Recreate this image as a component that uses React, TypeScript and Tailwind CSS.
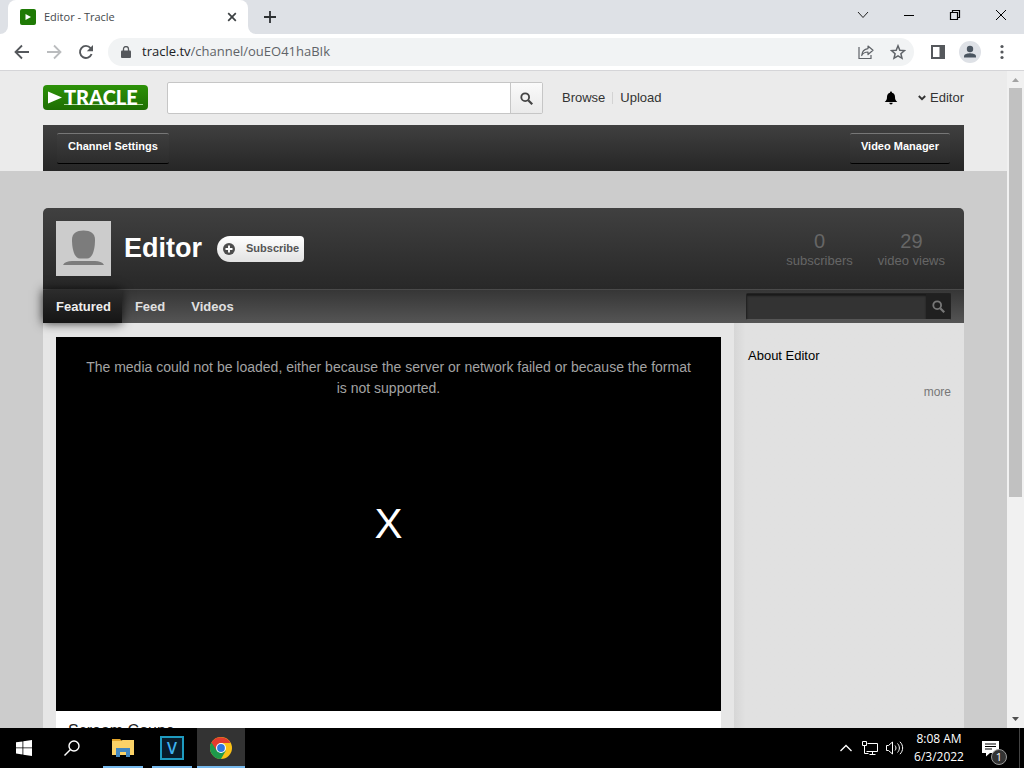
import React from "react";

const WindowTabs = () => {
  return (
    <div className="flex h-[34px] items-stretch bg-[#dee1e6]">
      <div className="flex w-2 items-end bg-white">
        <div className="h-full w-full rounded-br-lg bg-[#dee1e6]"></div>
      </div>
      <div className="flex w-[240px] items-center rounded-t-lg bg-white pl-3 pr-2">
        <svg className="h-4 w-4" viewBox="0 0 16 16">
          <rect width="16" height="16" rx="2" fill="#1f7a05" />
          <path d="M5.500 5v6l5.500-3z" fill="#fff" />
        </svg>
        <span className="ml-2 flex-1 text-[11px] text-[#45494d]">Editor - Tracle</span>
        <button aria-label="Close tab" className="flex h-4 w-4 items-center justify-center">
          <svg className="h-4 w-4" viewBox="0 0 16 16" stroke="#3c4043" strokeWidth="1.7">
            <path d="M4.200 4.200l7.600 7.600M11.800 4.200l-7.600 7.600" />
          </svg>
        </button>
      </div>
      <div className="w-2 bg-white">
        <div className="h-full w-full rounded-bl-lg bg-[#dee1e6]"></div>
      </div>
      <button aria-label="New tab" className="ml-1 flex w-5 items-center justify-center">
        <svg className="h-4 w-4" viewBox="0 0 16 16" stroke="#2d3033" strokeWidth="1.8">
          <path d="M8 2v12M2 8h12" />
        </svg>
      </button>
      <div className="ml-auto flex pb-1">
        <button aria-label="Search tabs" className="flex w-[46px] items-center justify-center">
          <svg className="h-3 w-3" viewBox="0 0 12 12" fill="none" stroke="#222">
            <path d="M1 3l5 5.500L11 3" />
          </svg>
        </button>
        <button aria-label="Minimize" className="flex w-[46px] items-center justify-center">
          <svg className="h-3 w-3" viewBox="0 0 12 12" stroke="#000">
            <path d="M1 6.500h10" />
          </svg>
        </button>
        <button aria-label="Restore" className="flex w-[46px] items-center justify-center">
          <svg className="h-3 w-3" viewBox="0 0 12 12" fill="none" stroke="#000" strokeWidth="1.200">
            <path d="M1.500 3.500h7v7h-7zM3.500 3.500v-2h7v7h-2" />
          </svg>
        </button>
        <button aria-label="Close" className="flex w-[46px] items-center justify-center">
          <svg className="h-3 w-3" viewBox="0 0 12 12" stroke="#000">
            <path d="M1 1l10 10M11 1L1 11" />
          </svg>
        </button>
      </div>
    </div>
  );
};

const Toolbar = () => {
  return (
    <div className="flex h-[37px] items-center border-b border-[#d5d5d8] bg-white px-[14px]">
      <div className="flex gap-4">
        <button aria-label="Back">
          <svg className="h-4 w-4" viewBox="0 0 16 16" fill="none" stroke="#55585c" strokeWidth="1.8">
            <path d="M15 8H2M8 1.500L1.500 8 8 14.500" />
          </svg>
        </button>
        <button aria-label="Forward">
          <svg className="h-4 w-4" viewBox="0 0 16 16" fill="none" stroke="#babcbe" strokeWidth="1.8">
            <path d="M1 8h13M8 1.500L14.500 8 8 14.500" />
          </svg>
        </button>
        <button aria-label="Reload">
          <svg className="h-4 w-4" viewBox="0 0 16 16" fill="none" stroke="#55585c" strokeWidth="1.9">
            <path d="M13.600 10A6 6 0 1 1 12.600 4.100L14 5.500" />
            <path d="M15 1v6.200H8.800z" fill="#55585c" stroke="none" />
          </svg>
        </button>
      </div>
      <div className="ml-[14px] flex h-7 flex-1 items-center rounded-full bg-[#f1f3f4] pl-[13px] pr-2 text-[13px]">
        <svg className="h-3 w-[10px]" viewBox="0 0 10 12">
          <rect y="4.500" width="10" height="7.500" rx="1" fill="#55585c" />
          <path d="M2.500 5V3a2.500 2.500 0 0 1 5 0v2" fill="none" stroke="#55585c" strokeWidth="1.300" />
        </svg>
        <label htmlFor="address" className="ml-[11px] text-[#202124]">tracle.tv</label>
        <input id="address" type="text" defaultValue="/channel/ouEO41haBIk" className="min-w-0 flex-1 text-[#5f6368] outline-none" />
        <button aria-label="Share" className="mr-4">
          <svg className="h-4 w-4" viewBox="0 0 16 16" fill="none" stroke="#5f6368" strokeWidth="1.200">
            <path d="M1 3v11.500h12V11" />
            <path d="M10 2l5 4.300-5 4.200V8C7 8 5 9 3.700 11.500 4 7.500 6.500 5 10 4.600z" strokeLinejoin="round" />
          </svg>
        </button>
        <button aria-label="Bookmark">
          <svg className="h-4 w-4" viewBox="0 0 16 16" fill="none" stroke="#5f6368" strokeWidth="1.500">
            <path d="M8 1.800l1.800 4.400 4.700.4-3.600 3.100 1.100 4.600L8 11.900l-4 2.400 1.100-4.600-3.600-3.100 4.700-.4z" />
          </svg>
        </button>
      </div>
      <div className="ml-4 flex items-center gap-[13px]">
        <button aria-label="Side panel">
          <svg className="h-4 w-4" viewBox="0 0 16 16">
            <path d="M1 1h14v14H1z" fill="#55585c" />
            <path d="M3 3h6.500v10H3z" fill="#fff" />
          </svg>
        </button>
        <button aria-label="Profile" className="rounded-full bg-[#dee1e6]">
          <svg className="h-[22px] w-[22px]" viewBox="0 0 22 22" fill="#4a5560">
            <circle cx="11" cy="8" r="3.200" />
            <path d="M5 16.500v-1.300C5 13 9 12.200 11 12.200s6 .8 6 3v1.300z" />
          </svg>
        </button>
        <button aria-label="Menu">
          <svg className="h-4 w-4" viewBox="0 0 16 16" fill="#55585c">
            <circle cx="8" cy="2.500" r="1.600" />
            <circle cx="8" cy="8" r="1.600" />
            <circle cx="8" cy="13.500" r="1.600" />
          </svg>
        </button>
      </div>
    </div>
  );
};

const SearchGlyph = ({ color }: { color: string }) => (
  <svg className="h-[13px] w-[13px]" viewBox="0 0 12 12" fill="none" stroke={color} strokeWidth="1.700">
    <circle cx="4.800" cy="4.800" r="3.600" />
    <path d="M7.600 7.600L11.300 11.300" strokeWidth="2" />
  </svg>
);

const SiteHeader = () => {
  return (
    <header className="h-[100px] bg-[#ebebeb]">
      <div className="mx-auto w-full max-w-[921px]">
        <div className="flex h-[54px] items-center">
          <a href="#" aria-label="Tracle home" className="mb-[2px]">
            <svg className="h-[25px] w-[105px]" viewBox="0 0 105 25">
              <defs>
                <linearGradient id="logo" x1="0" y1="0" x2="0" y2="1">
                  <stop offset="0" stopColor="#2d9208" />
                  <stop offset="1" stopColor="#1e6d03" />
                </linearGradient>
              </defs>
              <rect width="105" height="25" rx="4" fill="url(#logo)" />
              <path d="M5 6.500v12l14-6z" fill="#fff" />
              <path d="M21 19.500h79" stroke="#a9d59a" />
              <text x="21" y="19.500" fill="#fff" fontFamily="Lato" fontWeight="900" fontSize="20">TRACLE</text>
            </svg>
          </a>
          <form className="ml-[19px] flex h-8 w-[376px] rounded-xs border border-[#c6c6c6] bg-white">
            <input type="text" aria-label="Search" className="min-w-0 flex-1 px-2 text-sm outline-none" />
            <button type="button" aria-label="Search" className="flex w-8 items-center justify-center border-l border-[#c6c6c6] bg-linear-to-b from-[#fafafa] to-[#eaeaea]">
              <SearchGlyph color="#444" />
            </button>
          </form>
          <nav className="ml-[19px] flex items-center text-[13px] text-[#333]">
            <a href="#">Browse</a>
            <span className="mx-[7px] h-3 w-px bg-[#d3d3d3]"></span>
            <a href="#">Upload</a>
          </nav>
          <div className="ml-auto flex items-center text-[13px] text-[#333]">
            <button aria-label="Notifications">
              <svg className="h-[14px] w-[14px]" viewBox="0 0 14 14" fill="#000">
                <path d="M7 0.500c.7 0 1 .5 1 1.200 2 .5 3 2 3 4.300 0 2.500.8 3.700 2.300 5H.7C2.200 9.700 3 8.500 3 6c0-2.300 1-3.800 3-4.300 0-.7.3-1.200 1-1.200zM5.300 11.700h3.400a1.700 1.700 0 0 1-3.400 0z" />
              </svg>
            </button>
            <button className="ml-5 flex items-center gap-1">
              <svg className="h-2 w-2" viewBox="0 0 8 8" fill="none" stroke="#333" strokeWidth="1.900">
                <path d="M0.800 2L4 5.200 7.200 2" />
              </svg>
              Editor
            </button>
          </div>
        </div>
        <div className="flex h-[46px] items-start justify-between bg-linear-to-b from-[#404040] to-[#262626] px-[14px] pt-2 text-[11px] font-bold text-white">
          <button className="h-[31px] rounded-xs border-t border-b border-t-[#777] border-b-black bg-linear-to-b from-[#3e3e3e] to-[#2c2c2c] px-[11px] pb-1">
            Channel Settings
          </button>
          <button className="h-[31px] rounded-xs border-t border-b border-t-[#777] border-b-black bg-linear-to-b from-[#3e3e3e] to-[#2c2c2c] px-[11px] pb-1">
            Video Manager
          </button>
        </div>
      </div>
    </header>
  );
};

const ChannelHeader = () => {
  return (
    <div>
      <div className="flex h-[81px] items-center rounded-t-[5px] bg-linear-to-b from-[#404040] to-[#282828] px-[13px]">
        <svg className="h-[55px] w-[55px]" viewBox="0 0 55 55">
          <rect width="55" height="55" fill="#ccc" />
          <path d="M27.500 9.500c7 0 11.500 3 11.500 9 0 9-2 19-8 19h-7c-6 0-8-10-8-19 0-6 4.500-9 11.500-9z" fill="#7c7c7c" />
          <path d="M7 44c1.500-3 5-4 9-4h23c4 0 7.500 1 9 4z" fill="#7c7c7c" />
        </svg>
        <h1 className="ml-[13px] text-[27px] font-bold text-white">Editor</h1>
        <button className="ml-[15px] flex h-[26px] items-center rounded-l-[13px] rounded-r-[4px] bg-linear-to-b from-white to-[#e2e2e2] pl-[6px] pr-[5px] text-[11px] font-bold text-[#555]">
          <svg className="mr-[11px] h-3 w-3" viewBox="0 0 12 12">
            <circle cx="6" cy="6" r="6" fill="#4d4d4d" />
            <path d="M6 2.500v7M2.500 6h7" stroke="#fff" strokeWidth="1.900" />
          </svg>
          Subscribe
        </button>
        <div className="ml-auto flex gap-[25px] pr-[6px] text-center text-[13px] leading-4 text-[#666]">
          <div>
            <div className="text-xl leading-6">0</div>
            subscribers
          </div>
          <div>
            <div className="text-xl leading-6">29</div>
            video views
          </div>
        </div>
      </div>
      <div className="flex h-[34px] items-stretch border-t border-[#4a4a4a] bg-linear-to-b from-[#363636] to-[#555] pr-[13px] text-[13px] font-bold text-[#e0e0e0]">
        <a href="#" className="relative flex items-center bg-linear-to-b from-[#2c2c2c] to-[#151515] pr-[11px] pl-[13px] text-[#eee] shadow-[0_0_10px_rgba(0,0,0,0.8)]">Featured</a>
        <a href="#" className="ml-[13px] flex items-center">Feed</a>
        <a href="#" className="ml-[26px] flex items-center">Videos</a>
        <form className="mb-[3px] ml-auto mt-[3px] flex w-[205px] rounded-xs border border-[#222] border-b-[#555] bg-[#333]">
          <input type="text" aria-label="Search channel" className="min-w-0 flex-1 px-2 text-white shadow-[inset_0_2px_2px_rgba(0,0,0,0.5)] outline-none" />
          <button type="button" aria-label="Search channel" className="flex w-6 items-center justify-center bg-[#202020]">
            <SearchGlyph color="#777" />
          </button>
        </form>
      </div>
    </div>
  );
};

const ChannelBody = () => {
  return (
    <div className="flex min-h-0 flex-1">
      <main className="flex min-w-0 flex-1 flex-col overflow-hidden bg-[#e6e6e6] px-[13px] pt-[14px]">
        <div className="flex h-[374px] shrink-0 flex-col bg-black px-6 pt-5 text-center">
          <p className="text-sm leading-[21px] text-[#a3a3a3]">
            The media could not be loaded, either because the server or network failed or because the format is not supported.
          </p>
          <span className="mt-[100px] text-[42px] leading-[50px] text-white">X</span>
        </div>
        <div className="shrink-0 bg-white px-3 pt-[10px] pb-10">
          <h2 className="text-base leading-5 text-[#222]">Scream Coupe</h2>
        </div>
      </main>
      <aside className="w-[230px] bg-linear-to-r from-[#d6d6d6] to-[#e1e1e1] to-5% px-[13px] pt-[23px] pl-[14px]">
        <h2 className="text-[13px] leading-5 text-black">About Editor</h2>
        <a href="#" className="mt-4 block text-right text-xs leading-5 text-[#777]">more</a>
      </aside>
    </div>
  );
};

const Scrollbar = () => {
  return (
    <div className="flex w-[17px] flex-col items-center bg-[#f1f1f1]">
      <svg className="h-[17px] w-[17px]" viewBox="0 0 17 17" fill="#a3a3a3">
        <path d="M5 11l3.500-4 3.500 4z" />
      </svg>
      <div className="h-[409px] w-[13px] bg-[#c1c1c1]"></div>
      <svg className="mt-auto h-[17px] w-[17px]" viewBox="0 0 17 17" fill="#505050">
        <path d="M5 6l3.500 4L12 6z" />
      </svg>
    </div>
  );
};

const Taskbar = () => {
  return (
    <footer className="flex h-10 items-stretch bg-black text-xs text-white">
      <button aria-label="Start" className="flex w-12 items-center justify-center">
        <svg className="h-4 w-4" viewBox="0 0 16 16" fill="#fff">
          <path d="M0 2.300l6.500-.9v6.100H0zM7.300 1.300L16 0v7.500H7.300zM0 8.300h6.500v6.200L0 13.600zM7.300 8.300H16V16l-8.700-1.300z" />
        </svg>
      </button>
      <button aria-label="Search" className="flex w-12 items-center justify-center">
        <svg className="h-4 w-4" viewBox="0 0 16 16" fill="none" stroke="#fff" strokeWidth="1.400">
          <circle cx="10" cy="6" r="5" />
          <path d="M6.500 9.500L0.500 15.500" />
        </svg>
      </button>
      <button aria-label="File Explorer" className="ml-[7px] flex w-10 items-center justify-center border-b-2 border-[#76b9ed] pt-[2px]">
        <svg className="h-[22px] w-[22px]" viewBox="0 0 22 22">
          <path d="M0 2h8l2 2H0z" fill="#e3a52a" />
          <path d="M0 4h9l1.500-1H22V18H0z" fill="#fbd267" />
          <path d="M4 11h14v9h-4v-5H8v5H4z" fill="#4287c0" />
        </svg>
      </button>
      <button aria-label="Vegas" className="ml-[9px] flex w-10 items-center justify-center border-b-2 border-[#76b9ed] pt-[2px]">
        <span className="flex h-6 w-6 items-center justify-center border-2 border-[#1e9bc0] bg-[#081c2a] text-base font-semibold text-[#3fb2f0]">V</span>
      </button>
      <button aria-label="Chrome" className="ml-[5px] flex w-12 items-center justify-center border-b-2 border-[#76b9ed] bg-[#333] pt-[2px]">
        <svg className="h-[22px] w-[22px]" viewBox="0 0 22 22">
          <circle cx="11" cy="11" r="11" fill="#fbc116" />
          <path d="M11 11L1.470 5.500A11 11 0 0 0 11 22l4.760-8.250z" fill="#1e9a4b" />
          <path d="M11 6h9.530A11 11 0 0 0 1.470 5.500L6.670 13.500 11 11z" fill="#e33b2e" />
          <circle cx="11" cy="11" r="5" fill="#fff" />
          <circle cx="11" cy="11" r="3.900" fill="#3076e0" />
        </svg>
      </button>
      <div className="ml-auto flex items-center">
        <button aria-label="Show hidden icons">
          <svg className="h-3 w-3" viewBox="0 0 12 12" fill="none" stroke="#fff" strokeWidth="1.300">
            <path d="M0.500 9L6 3.500 11.500 9" />
          </svg>
        </button>
        <svg className="ml-[10px] h-4 w-4" viewBox="0 0 16 16" fill="none" stroke="#fff">
          <path d="M5.500 3.500h10v8h-11M0.500 1.500h4v4h-4zM2.500 5.500v8h4M10.500 11.500v2.500M7.500 14.500h6" />
        </svg>
        <svg className="ml-2 h-4 w-[18px]" viewBox="0 0 18 16" fill="none" stroke="#fff">
          <path d="M0.500 5.500h2L6.500 2v12l-4-3.500h-2zM9 5.500c1.300 1.500 1.300 3.500 0 5M11.500 3.500c2.500 2.700 2.500 6.300 0 9M14 1.800c3.500 3.700 3.500 8.700 0 12.400" />
        </svg>
        <div className="w-[70px] text-center leading-[18px]">
          <div>8:08 AM</div>
          <div>6/3/2022</div>
        </div>
        <button aria-label="Notifications" className="relative ml-2 mr-5">
          <svg className="h-[17px] w-[17px]" viewBox="0 0 17 17">
            <path d="M0 1h17v12H8l-4 3.500V13H0z" fill="#fff" />
            <path d="M3 4h11M3 6.500h11M3 9h7" stroke="#000" />
          </svg>
          <span className="absolute -right-2 -bottom-2 flex h-4 w-4 items-center justify-center rounded-full border border-[#999] bg-[#333] text-[11px] leading-none">1</span>
        </button>
        <div className="mr-1 h-10 w-px bg-[#444]"></div>
      </div>
    </footer>
  );
};

const App = () => {
  return (
    <div className="flex h-screen flex-col overflow-hidden font-['Open_Sans',sans-serif]">
      <WindowTabs />
      <Toolbar />
      <div className="flex min-h-0 flex-1 font-['Liberation_Sans',Arial,sans-serif]">
        <div className="flex min-w-0 flex-1 flex-col overflow-hidden bg-[#ccc]">
          <SiteHeader />
          <div className="mx-auto mt-[37px] flex min-h-0 w-full max-w-[921px] flex-1 flex-col">
            <ChannelHeader />
            <ChannelBody />
          </div>
        </div>
        <Scrollbar />
      </div>
      <Taskbar />
    </div>
  );
};

export default App;
